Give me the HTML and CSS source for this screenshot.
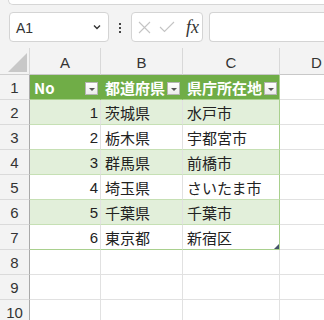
FILE: index.html
```html
<!DOCTYPE html>
<html lang="ja">
<head>
<meta charset="utf-8">
<link rel="stylesheet" href="styles.css">
</head>
<body>
<div class="topbox"></div>
<div class="fbar">
  <div class="namebox">
    <span class="nb-text">A1</span>
    <svg class="chev" width="8" height="6" viewBox="0 0 8 6"><path d="M1 1.5 L4 4.5 L7 1.5" fill="none" stroke="#333" stroke-width="1.4"/></svg>
  </div>
  <div class="kebab"><i></i><i></i><i></i></div>
  <div class="fxbox">
    <svg width="13" height="13" viewBox="0 0 13 13"><path d="M1 1 L12 12 M12 1 L1 12" stroke="#c4c4c4" stroke-width="1.1" fill="none"/></svg>
    <svg width="16" height="12" viewBox="0 0 16 12"><path d="M1 6 L5.5 10.5 L15 1" stroke="#c4c4c4" stroke-width="1.1" fill="none"/></svg>
    <span class="fx">fx</span>
  </div>
  <div class="finput"></div>
</div>
<div class="sheet">
  <div class="corner"><svg width="19" height="19" viewBox="0 0 19 19"><path d="M19 0 L19 19 L0 19 Z" fill="#c8c8c8"/></svg></div>
  <div class="ch">A</div><div class="ch">B</div><div class="ch">C</div><div class="ch chd">D</div>

  <div class="rh">1</div>
  <div class="c th"><span class="tt">No</span><span class="flt"></span></div>
  <div class="c th"><span class="tt">都道府県</span><span class="flt"></span></div>
  <div class="c th tr"><span class="tt">県庁所在地</span><span class="flt"></span></div>
  <div class="c"></div>

  <div class="rh">2</div>
  <div class="c tb odd num">1</div><div class="c tb odd">茨城県</div><div class="c tb odd tr">水戸市</div><div class="c"></div>
  <div class="rh">3</div>
  <div class="c tb num">2</div><div class="c tb">栃木県</div><div class="c tb tr">宇都宮市</div><div class="c"></div>
  <div class="rh">4</div>
  <div class="c tb odd num">3</div><div class="c tb odd">群馬県</div><div class="c tb odd tr">前橋市</div><div class="c"></div>
  <div class="rh">5</div>
  <div class="c tb num">4</div><div class="c tb">埼玉県</div><div class="c tb tr">さいたま市</div><div class="c"></div>
  <div class="rh">6</div>
  <div class="c tb odd num">5</div><div class="c tb odd">千葉県</div><div class="c tb odd tr">千葉市</div><div class="c"></div>
  <div class="rh">7</div>
  <div class="c tb last num">6</div><div class="c tb last">東京都</div><div class="c tb last tr">新宿区<span class="handle"></span></div><div class="c"></div>

  <div class="rh">8</div><div class="c"></div><div class="c"></div><div class="c"></div><div class="c"></div>
  <div class="rh">9</div><div class="c"></div><div class="c"></div><div class="c"></div><div class="c"></div>
  <div class="rh">10</div><div class="c"></div><div class="c"></div><div class="c"></div><div class="c"></div>
</div>
</body>
</html>
```
FILE: styles.css
```css
* { box-sizing: border-box; }
html, body { margin: 0; padding: 0; }
body {
  width: 324px;
  height: 320px;
  overflow: hidden;
  background: #f3f3f3;
  font-family: "Noto Sans CJK JP", "Noto Sans", sans-serif;
  color: #222;
}
.topbox {
  height: 5px;
  margin-left: 8px;
  background: #fff;
  border: 1px solid #d6d6d6;
  border-top: none;
  border-right: none;
  border-bottom-left-radius: 8px;
}
.fbar {
  display: flex;
  align-items: center;
  height: 30px;
  margin: 7px 0 6px 9px;
}
.namebox {
  width: 100px;
  height: 30px;
  background: #fff;
  border: 1px solid #d4d4d4;
  border-radius: 4px;
  display: flex;
  align-items: center;
  justify-content: space-between;
  padding: 0 7px 0 6px;
}
.nb-text {
  font-family: "Liberation Sans", sans-serif;
  font-size: 14px;
  color: #333;
  padding-top: 2px;
}
.kebab {
  width: 22px;
  display: flex;
  flex-direction: column;
  align-items: center;
  gap: 2px;
  padding-top: 2px;
}
.kebab i {
  display: block;
  width: 2px;
  height: 2px;
  background: #444;
}
.fxbox {
  width: 72px;
  height: 30px;
  background: #fff;
  border: 1px solid #d4d4d4;
  border-radius: 4px;
  display: flex;
  align-items: center;
  padding-left: 6px;
  gap: 8px;
}
.fx {
  font-family: "Liberation Serif", serif;
  font-style: italic;
  font-size: 18px;
  color: #333;
  margin-left: 3px;
  line-height: 1;
}
.finput {
  flex: 1;
  height: 30px;
  margin-left: 6px;
  background: #fff;
  border: 1px solid #d4d4d4;
  border-right: none;
  border-radius: 4px 0 0 4px;
}
.sheet {
  display: grid;
  grid-template-columns: 30px 71px 82px 97px 60px;
  grid-template-rows: 27px repeat(10, 25px);
  background: #fff;
}
.corner {
  background: #f3f3f3;
  border-right: 1px solid #d8d8d8;
  border-bottom: 1px solid #d0d0d0;
  display: flex;
  align-items: flex-end;
  justify-content: flex-end;
  padding: 0 2px 2px 0;
}
.corner svg { display: block; }
.ch {
  background: #f3f3f3;
  border-right: 1px solid #d8d8d8;
  border-bottom: 1px solid #c8c8c8;
  font-family: "Liberation Sans", sans-serif;
  font-size: 15px;
  color: #333;
  display: flex;
  align-items: center;
  justify-content: center;
  padding-top: 2px;
}
.chd { justify-content: flex-start; padding-left: 31px; border-right: none; }
.rh {
  background: #f3f3f3;
  border-right: 1px solid #a9a9a9;
  border-bottom: 1px solid #dadada;
  font-family: "Liberation Sans", sans-serif;
  font-size: 15px;
  color: #333;
  display: flex;
  align-items: center;
  justify-content: center;
  padding-top: 1px;
}
.c {
  border-right: 1px solid #e1e1e1;
  border-bottom: 1px solid #e1e1e1;
  font-size: 15px;
  line-height: 1;
  display: flex;
  align-items: center;
  padding: 1px 3px 0 4px;
  white-space: nowrap;
  position: relative;
}
.th {
  background: #70ad47;
  color: #fff;
  font-weight: bold;
  border-right-color: #70ad47;
  border-bottom-color: #a9d08e;
  justify-content: space-between;
  padding-right: 2px;
}
.th .tt { font-family: "Noto Sans CJK JP", "Noto Sans", sans-serif; }
.th:first-of-type .tt { font-family: "Liberation Sans", sans-serif; }
.flt {
  width: 13px;
  height: 13px;
  background: linear-gradient(#ffffff, #ececec);
  border: 1px solid #b5b5b5;
  position: relative;
  flex: none;
  margin-top: 2px;
}
.flt::after {
  content: "";
  position: absolute;
  left: 3px;
  top: 5px;
  border-left: 3px solid transparent;
  border-right: 3px solid transparent;
  border-top: 3px solid #555;
}
.tb { border-bottom-color: #c6e0b4; border-right-color: #e1e1e1; }
.odd { background: #e2efda; }
.tr { border-right-color: #a9d08e; }
.last { border-bottom-color: #a9d08e; }
.num {
  justify-content: flex-end;
  font-family: "Liberation Sans", sans-serif;
  padding-right: 2px;
}
.handle {
  position: absolute;
  right: 0;
  bottom: 0;
  width: 0;
  height: 0;
  border-left: 5px solid transparent;
  border-bottom: 5px solid #44546a;
}
```
